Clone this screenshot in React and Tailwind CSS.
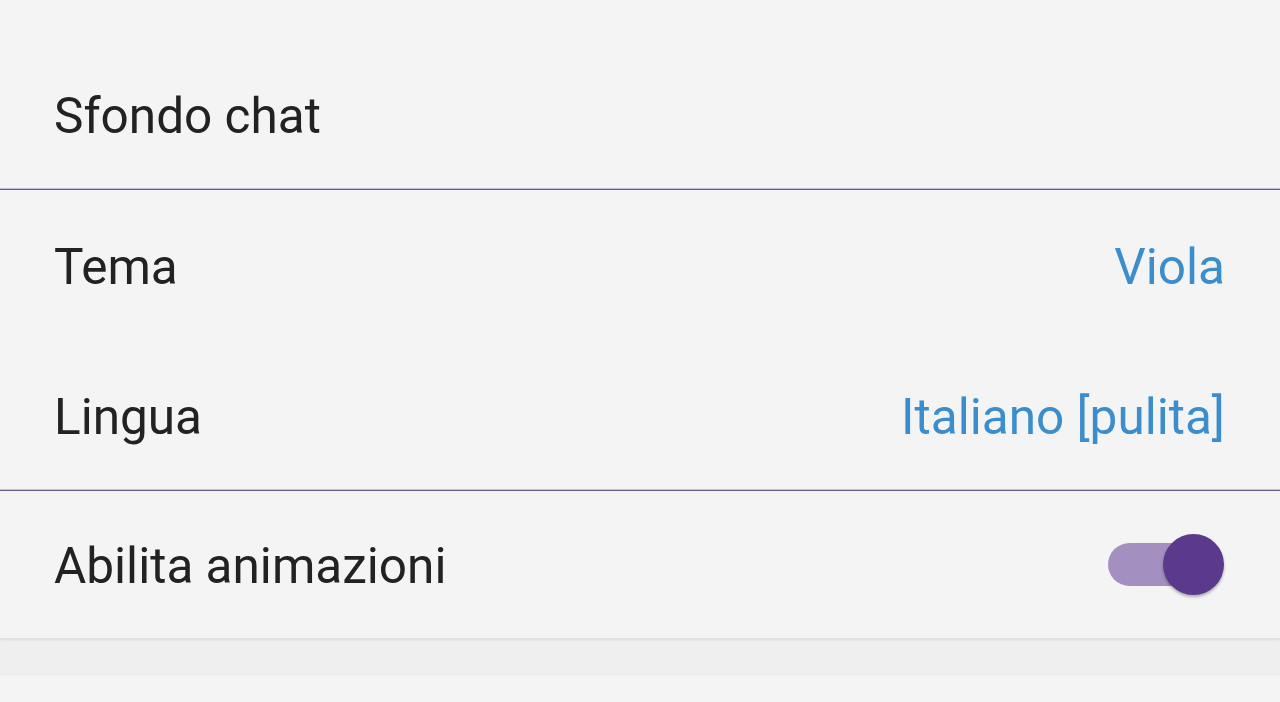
import React, { useState } from 'react';

const rows = [
  { label: 'Tema', value: 'Viola' },
  { label: 'Lingua', value: 'Italiano [pulita]' },
];

function Toggle({ on, onChange }) {
  return (
    <button
      onClick={() => onChange(!on)}
      className="relative w-[118px] h-[62px] flex items-center"
    >
      <span className="absolute left-[2px] w-[84px] h-[43px] rounded-full bg-[#a390c0]" />
      <span
        className={
          on
            ? 'absolute right-0 w-[61px] h-[61px] rounded-full bg-[#5b3a8e] shadow-[0_2px_3px_rgba(0,0,0,0.3)]'
            : 'absolute left-0 w-[61px] h-[61px] rounded-full bg-[#f1f1f1] shadow-[0_2px_3px_rgba(0,0,0,0.3)]'
        }
      />
    </button>
  );
}

export default function App() {
  const [anim, setAnim] = useState(true);

  return (
    <div
      className="w-[1280px] h-[702px] bg-[#f4f4f4] text-[#222222] overflow-hidden"
      style={{ fontFamily: 'Roboto, "Noto Sans", sans-serif' }}
    >
      <div className="pt-[42px] shadow-[0_2px_2px_rgba(0,0,0,0.08)] relative">
        <div className="h-[146px] flex items-center px-[54px] text-[49.5px] pt-[2px]">Sfondo chat</div>
        <div className="h-[1px] bg-[#c7bbdb]" />
        <div className="h-[1px] bg-[#6d589a]" />

        {rows.map(r => (
          <div key={r.label} className="h-[150px] flex items-center justify-between pl-[54px] pr-[55px] text-[49.5px] pt-[4px]">
            <span>{r.label}</span>
            <span className="text-[#3b8dcc]">{r.value}</span>
          </div>
        ))}
        <div className="h-[1px] bg-[#c7bbdb] -mt-[1px]" />
        <div className="h-[1px] bg-[#6d589a]" />

        <div className="h-[147px] flex items-center justify-between pl-[54px] pr-[56px] text-[49.5px]">
          <span className="pt-[4px]">Abilita animazioni</span>
          <Toggle on={anim} onChange={setAnim} />
        </div>
      </div>
      <div className="h-[37px] bg-[#efefef] border-b border-[#e9e9e9]" />
    </div>
  );
}
